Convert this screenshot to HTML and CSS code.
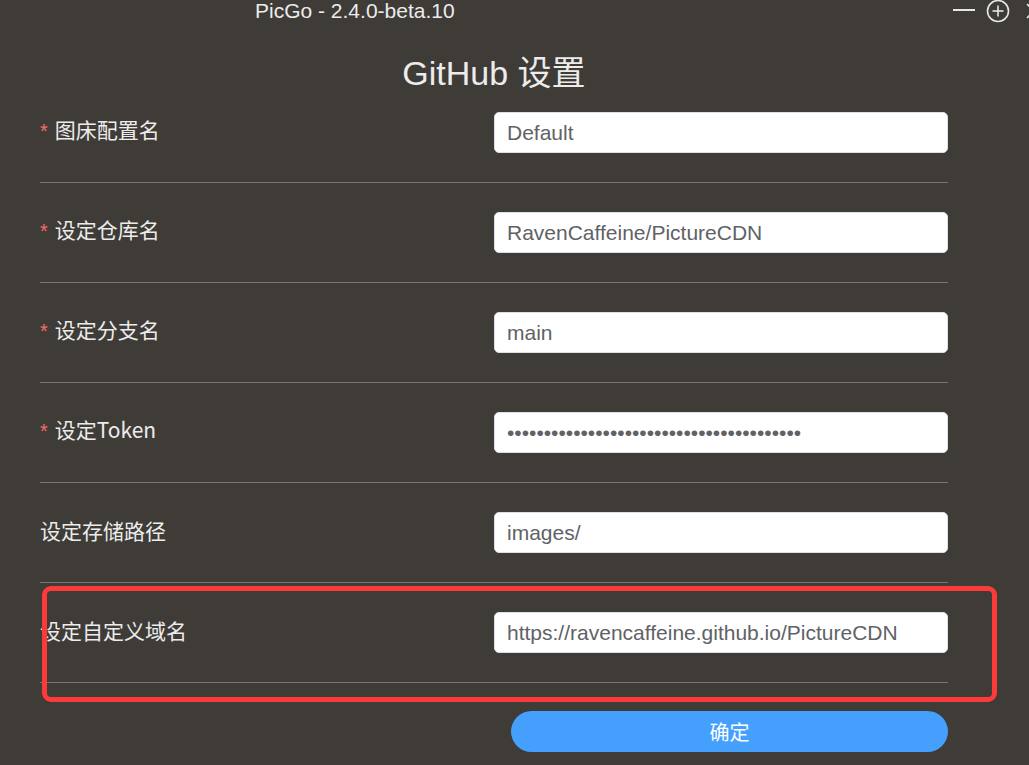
FILE: index.html
```html
<!DOCTYPE html>
<html lang="zh-CN">
  <head>
    <meta charset="utf-8" />
    <title>PicGo - GitHub 设置</title>
    <link rel="stylesheet" href="styles.css">
  </head>
  <body>
    <div class="titlebar">
      <span class="titlebar__name">PicGo - 2.4.0-beta.10</span>
      <div class="titlebar__controls">
        <svg class="titlebar__icon" width="24" height="22" viewBox="0 0 24 22">
          <line x1="1" y1="10" x2="23" y2="10" stroke="#e6e6e6" stroke-width="2"/>
        </svg>
        <svg class="titlebar__icon" width="26" height="24" viewBox="0 0 26 24">
          <circle cx="12" cy="11" r="10.5" fill="none" stroke="#e6e6e6" stroke-width="1.6"/>
          <line x1="6.5" y1="11" x2="17.5" y2="11" stroke="#e6e6e6" stroke-width="1.6"/>
          <line x1="12" y1="5.5" x2="12" y2="16.5" stroke="#e6e6e6" stroke-width="1.6"/>
        </svg>
        <svg class="titlebar__icon titlebar__icon--close" width="16" height="22" viewBox="0 0 16 22">
          <line x1="2" y1="4" x2="16" y2="18" stroke="#e6e6e6" stroke-width="1.6"/>
          <line x1="2" y1="18" x2="16" y2="4" stroke="#e6e6e6" stroke-width="1.6"/>
        </svg>
      </div>
    </div>

    <h1 class="setting-title">GitHub 设置</h1>

    <form class="setting-form">
      <div class="setting-form__row">
        <label class="setting-form__label"><span class="required">*</span>图床配置名</label>
        <input class="setting-form__input" type="text" value="Default">
      </div>
      <div class="setting-form__row">
        <label class="setting-form__label"><span class="required">*</span>设定仓库名</label>
        <input class="setting-form__input" type="text" value="RavenCaffeine/PictureCDN">
      </div>
      <div class="setting-form__row">
        <label class="setting-form__label"><span class="required">*</span>设定分支名</label>
        <input class="setting-form__input" type="text" value="main">
      </div>
      <div class="setting-form__row">
        <label class="setting-form__label"><span class="required">*</span>设定Token</label>
        <input class="setting-form__input" type="password" value="ghp_0123456789abcdefghijklmnopqrstuvwxyz">
      </div>
      <div class="setting-form__row">
        <label class="setting-form__label">设定存储路径</label>
        <input class="setting-form__input" type="text" value="images/">
      </div>
      <div class="setting-form__row setting-form__row--marked">
        <label class="setting-form__label">设定自定义域名</label>
        <input class="setting-form__input" type="text" value="https://ravencaffeine.github.io/PictureCDN">
        <span class="highlight-box"></span>
      </div>
      <div class="setting-form__actions">
        <button class="confirm-btn" type="button">确定</button>
      </div>
    </form>
  </body>
</html>
```

FILE: styles.css
```css
html, body {
	margin: 0;
	padding: 0;
	height: 100%;
	overflow: hidden;
}

body {
	background: #3f3b37;
	color: #e6e6e6;
	font-family: "Liberation Sans", Arial, "Noto Sans CJK SC", sans-serif;
}

.titlebar {
	height: 22px;
	position: relative;
	display: flex;
	align-items: center;
	padding-left: 255px;
}

.titlebar__name {
	font-size: 21px;
	line-height: 22px;
	color: #ececec;
}

.titlebar__controls {
	position: absolute;
	top: 0;
	left: 952px;
	display: flex;
	align-items: flex-start;
	gap: 10px;
}

.titlebar__icon {
	display: block;
}

.titlebar__icon--close {
	margin-left: 3px;
}

.setting-title {
	margin: 0 81px 0 40px;
	padding-top: 41px;
	line-height: 20px;
	height: 20px;
	font-size: 34px;
	font-weight: normal;
	text-align: center;
	color: #ececec;
}

.setting-form {
	margin: 0 81px 0 40px;
}

.setting-form__row {
	height: 99px;
	display: flex;
	align-items: center;
	justify-content: space-between;
	border-bottom: 1px solid #7a7672;
}

.setting-form__row--marked {
	position: relative;
}

.setting-form__label {
	font-size: 21px;
	line-height: 24px;
	margin-bottom: 5px;
	color: #ececec;
	font-family: "Noto Sans CJK SC", sans-serif;
}

.required {
	color: #f56c6c;
	font-family: "Liberation Sans", sans-serif;
	font-size: 20px;
	margin-right: 7px;
}

.setting-form__input {
	width: 454px;
	height: 41px;
	box-sizing: border-box;
	border: 1px solid #dcdfe6;
	border-radius: 5px;
	background: #fff;
	padding: 0 12px;
	font-family: "Liberation Sans", Arial, sans-serif;
	font-size: 21px;
	color: #606266;
	outline: none;
}

.highlight-box {
	position: absolute;
	left: 2px;
	top: 3px;
	width: 955px;
	height: 116px;
	box-sizing: border-box;
	border: 5px solid #fd3a3a;
	border-radius: 9px;
	pointer-events: none;
}

.setting-form__actions {
	display: flex;
	justify-content: flex-end;
	padding-top: 28px;
}

.confirm-btn {
	width: 437px;
	height: 41px;
	border: none;
	border-radius: 21px;
	background: #45a0fd;
	color: #fff;
	font-family: "Noto Sans CJK SC", sans-serif;
	font-size: 20px;
}
```
